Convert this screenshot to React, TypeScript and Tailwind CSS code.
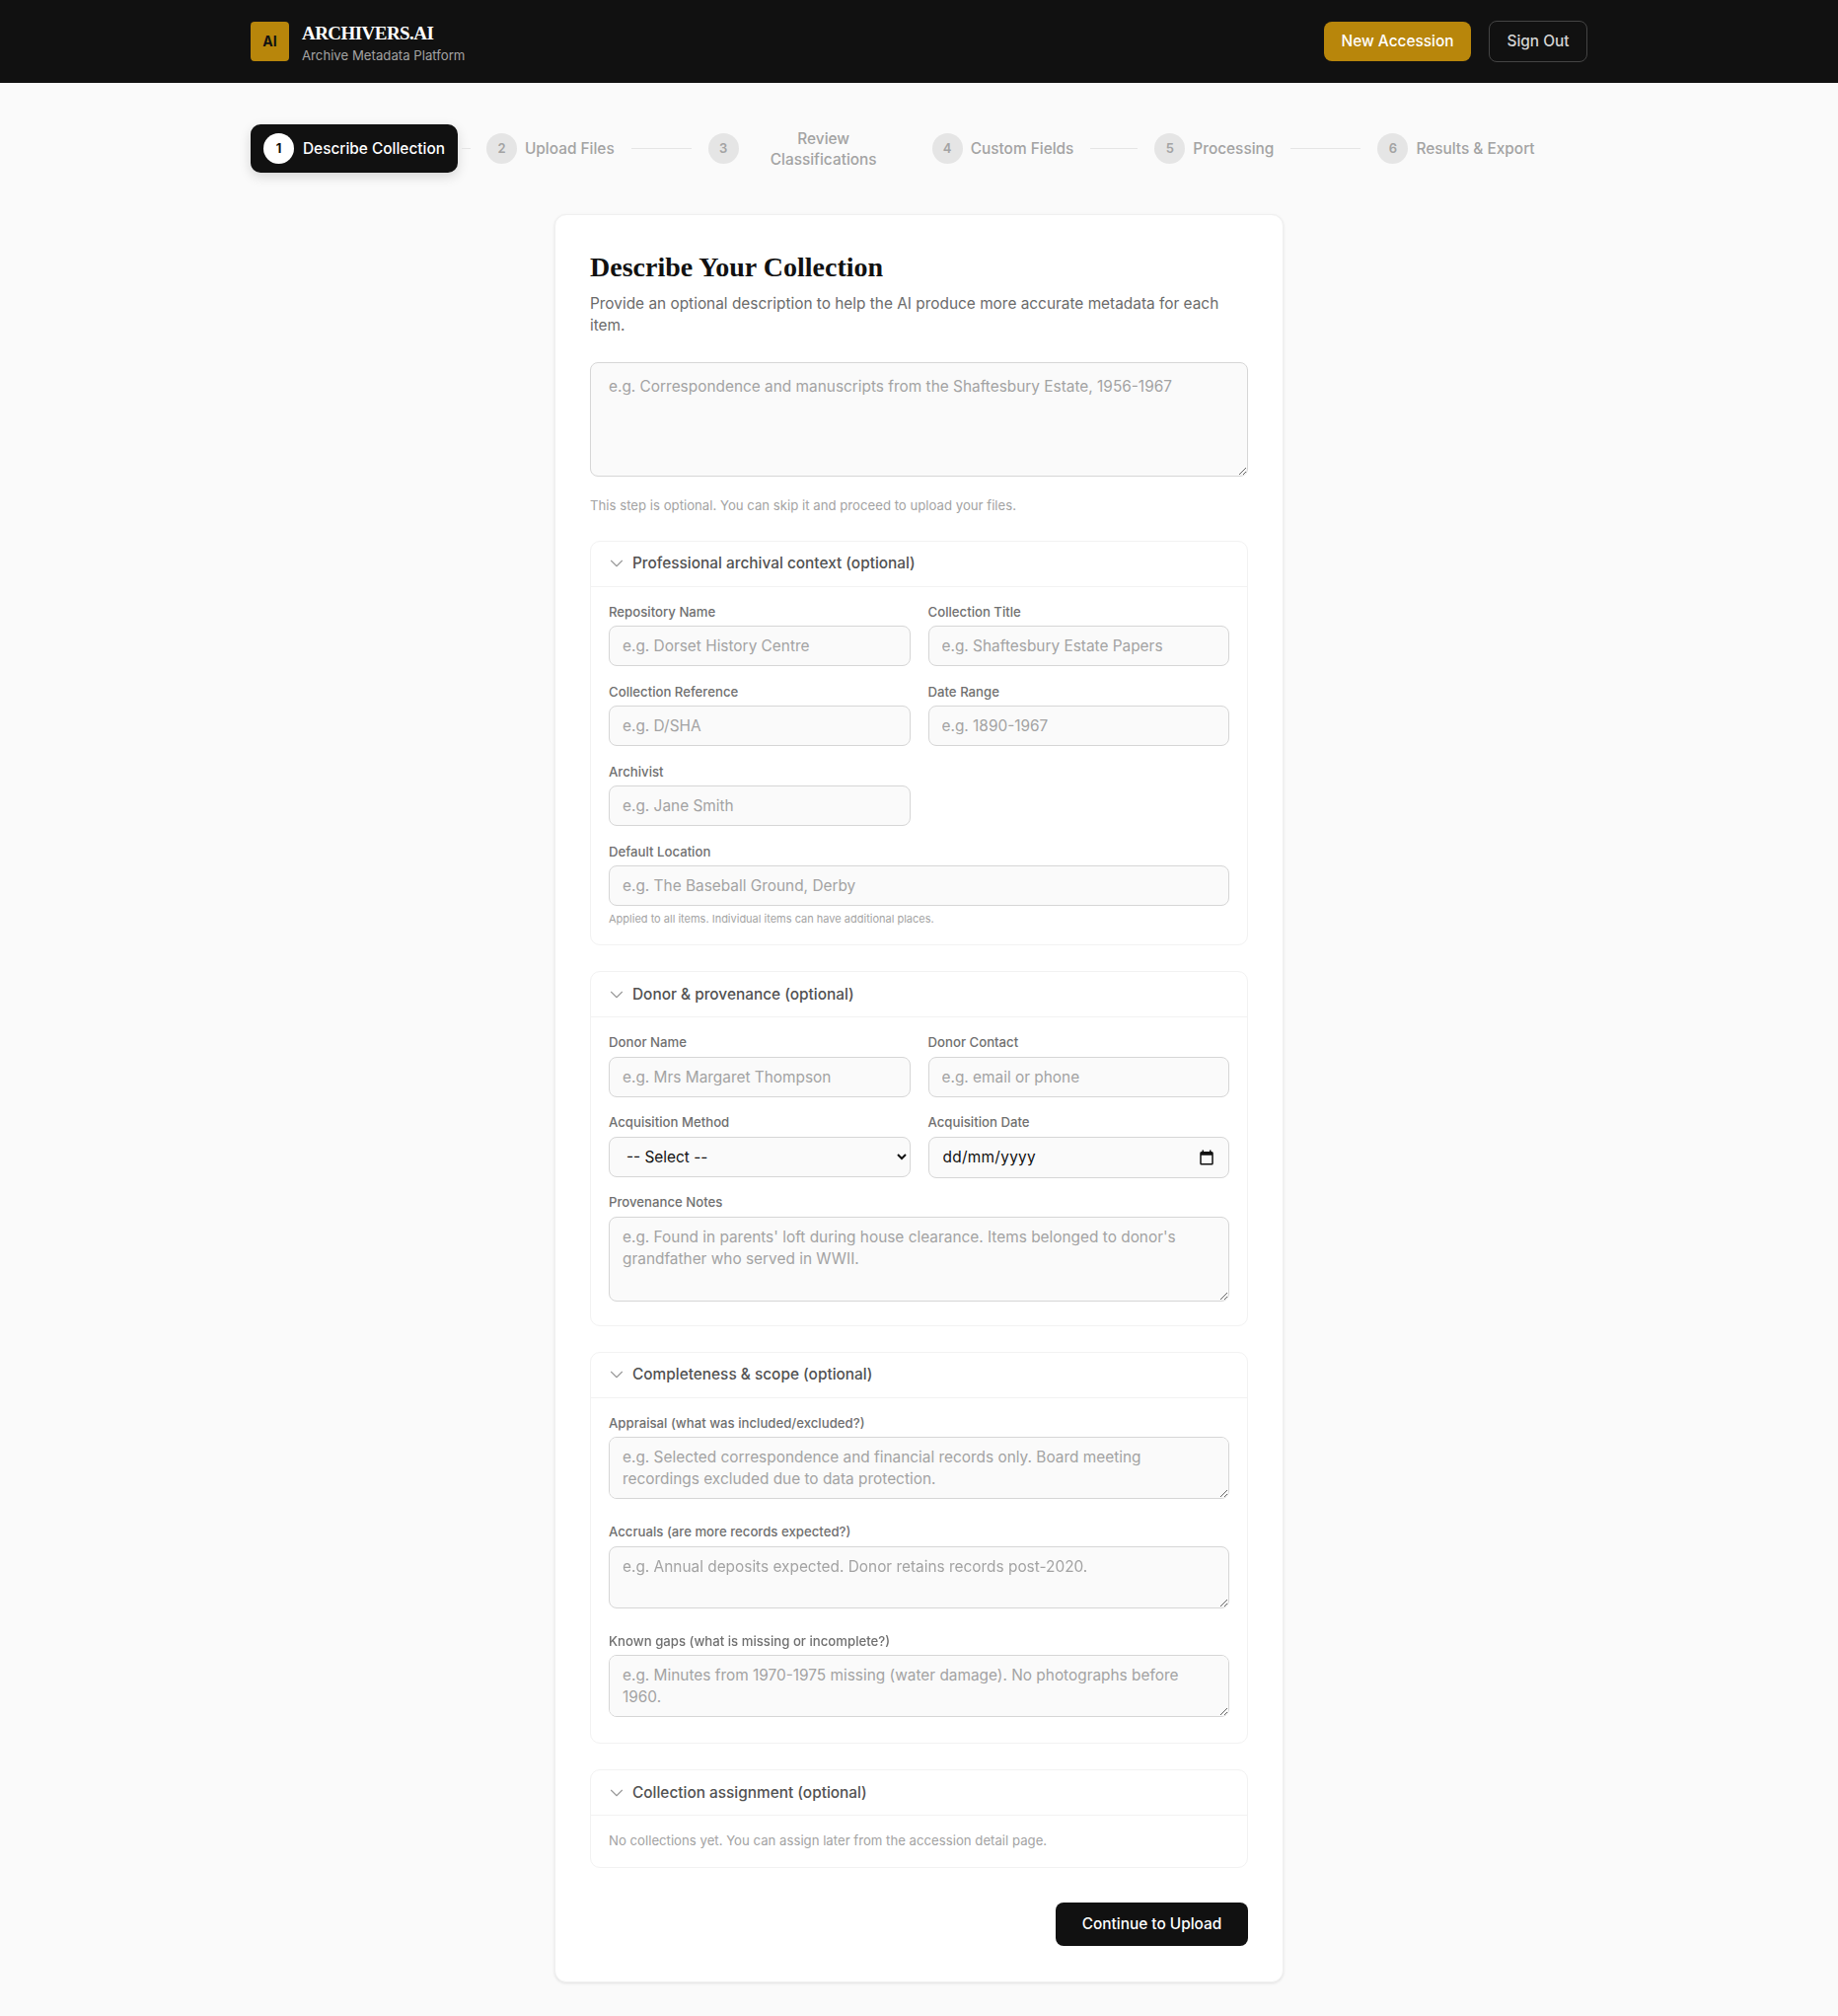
import React from 'react';
import { ChevronDown } from 'lucide-react';

const inter = "font-['Inter',sans-serif]";

const steps = [
  { n: 2, label: 'Upload Files', line: 'w-[61px]' },
  { n: 3, label: 'Review Classifications', line: '', wrap: true },
  { n: 4, label: 'Custom Fields', line: 'w-[48px]' },
  { n: 5, label: 'Processing', line: 'w-[71px]' },
  { n: 6, label: 'Results & Export', line: '' },
];

const inputCls =
  "block w-full h-[41px] rounded-lg border border-[#d6d6d6] bg-[#fafafa] px-[13px] text-[15.4px] text-[#111] placeholder:text-[#a3a3a3] outline-none";
const areaCls =
  "block w-full rounded-lg border border-[#d6d6d6] bg-[#fafafa] px-[13px] py-[9px] text-[15.4px] leading-[22px] text-[#111] placeholder:text-[#a3a3a3] outline-none";

const Label: React.FC<{ children: React.ReactNode }> = ({ children }) => (
  <label className="block mb-[4px] text-[13.2px] leading-[19.5px] font-medium text-[#707070]">{children}</label>
);

const Field: React.FC<{ label: string; placeholder: string }> = ({ label, placeholder }) => (
  <div>
    <Label>{label}</Label>
    <input className={inputCls} placeholder={placeholder} />
  </div>
);

const AreaField: React.FC<{ label: string; placeholder: string; h: string }> = ({ label, placeholder, h }) => (
  <div>
    <Label>{label}</Label>
    <textarea className={`${areaCls} ${h}`} placeholder={placeholder} />
  </div>
);

const Section: React.FC<{ title: string; pb?: string; children: React.ReactNode }> = ({ title, pb = 'pb-[18px]', children }) => (
  <section className="mb-[26px] rounded-[10px] border border-[#f2f2f2]">
    <div className="flex h-[46px] items-center gap-[5px] border-b border-[#f2f2f2] pl-[15px] pr-[18px]">
      <ChevronDown className="h-[22px] w-[22px] text-[#999]" strokeWidth={1.2} />
      <span className="text-[15.4px] font-medium text-[#525252]">{title}</span>
    </div>
    <div className={`px-[18px] pt-[16px] ${pb}`}>{children}</div>
  </section>
);

export default function App() {
  return (
    <div className={`${inter} min-h-[2043px] bg-[#fafafa] text-[#111]`}>
      <header className="h-[84px] bg-[#111111]">
        <div className="mx-auto flex h-full w-[1355px] items-center justify-between">
          <div className="flex items-center gap-[13px]">
            <div className="flex h-10 w-[39px] items-center justify-center rounded bg-[#b8860b] text-sm font-bold text-[#111]">AI</div>
            <div className="pt-[2px]">
              <div className="font-['Liberation_Serif',serif] text-[19px] leading-[26px] font-bold tracking-[-0.55px] text-white">ARCHIVERS.AI</div>
              <div className="text-[13.2px] leading-[19px] text-[#a3a3a3]">Archive Metadata Platform</div>
            </div>
          </div>
          <div className="flex items-center gap-[18px]">
            <button className="h-10 w-[149px] rounded-lg bg-[#b8860b] text-[15.4px] font-medium text-white">New Accession</button>
            <button className="h-[42px] w-[100px] rounded-lg border border-[#444] text-[15.4px] font-medium text-[#d4d4d4]">Sign Out</button>
          </div>
        </div>
      </header>

      <main className="mx-auto w-[1355px]">
        <nav className="mt-[42px] flex h-[49px] items-center">
          <div className="flex h-full items-center gap-[9px] rounded-[10px] bg-[#111] px-[13px] shadow-[0_4px_12px_rgba(0,0,0,0.15)]">
            <span className="flex h-[31px] w-[31px] items-center justify-center rounded-full bg-white text-[13px] font-bold text-[#111]">1</span>
            <span className="text-[15.4px] font-medium whitespace-nowrap text-white">Describe Collection</span>
          </div>
          <span className="mx-1 h-px w-[9px] bg-[#e5e5e5]" />
          {steps.map((s) => (
            <React.Fragment key={s.n}>
              <div className={`flex items-center gap-[8px] pl-[12px] ${s.wrap ? 'pr-[23px]' : 'pr-[12px]'}`}>
                <span className="flex h-[31px] w-[31px] items-center justify-center rounded-full bg-[#e5e5e5] text-[13px] font-semibold text-[#a3a3a3]">{s.n}</span>
                <span className={`text-[15.4px] leading-[21px] font-medium text-[#a3a3a3] ${s.wrap ? 'ml-[3px] w-[150px] px-[20px] text-center' : 'whitespace-nowrap'}`}>{s.label}</span>
              </div>
              {s.line ? <span className={`mx-[5px] h-px ${s.line} bg-[#e5e5e5]`} /> : null}
            </React.Fragment>
          ))}
        </nav>

        <div className="mx-auto mt-[42px] w-[739px] rounded-xl border border-[#f0f0f0] bg-white px-[35px] pt-[35px] pb-[36px] shadow-[0_1px_3px_rgba(0,0,0,0.1)]">
          <h1 className="font-['Liberation_Serif',serif] text-[28px] leading-[36px] font-bold text-[#111]">Describe Your Collection</h1>
          <p className="mt-[8px] text-[15.4px] leading-[22px] text-[#6b6b6b]">
            Provide an optional description to help the AI produce more accurate metadata for each item.
          </p>
          <textarea
            className="mt-[26px] block h-[116px] w-full rounded-lg border border-[#d6d6d6] bg-[#fafafa] px-[18px] py-[13px] text-[15.4px] leading-[22.5px] placeholder:text-[#a3a3a3] outline-none"
            placeholder="e.g. Correspondence and manuscripts from the Shaftesbury Estate, 1956-1967"
          />
          <p className="mt-[20px] mb-[25px] text-[13.2px] leading-[19.5px] text-[#a3a3a3]">
            This step is optional. You can skip it and proceed to upload your files.
          </p>

          <Section title="Professional archival context (optional)">
            <div className="grid grid-cols-2 gap-x-[18px] gap-y-[16.5px]">
              <Field label="Repository Name" placeholder="e.g. Dorset History Centre" />
              <Field label="Collection Title" placeholder="e.g. Shaftesbury Estate Papers" />
              <Field label="Collection Reference" placeholder="e.g. D/SHA" />
              <Field label="Date Range" placeholder="e.g. 1890-1967" />
              <Field label="Archivist" placeholder="e.g. Jane Smith" />
              <div />
              <div className="col-span-2">
                <Field label="Default Location" placeholder="e.g. The Baseball Ground, Derby" />
                <p className="mt-[5px] text-[11px] leading-[16px] text-[#a3a3a3]">Applied to all items. Individual items can have additional places.</p>
              </div>
            </div>
          </Section>

          <Section title="Donor & provenance (optional)" pb="pb-[24px]">
            <div className="grid grid-cols-2 gap-x-[18px] gap-y-[16.5px]">
              <Field label="Donor Name" placeholder="e.g. Mrs Margaret Thompson" />
              <Field label="Donor Contact" placeholder="e.g. email or phone" />
              <div>
                <Label>Acquisition Method</Label>
                <select className="block h-[41px] w-full rounded-lg border border-[#d6d6d6] bg-[#fafafa] px-[13px] text-[15.4px] text-[#111] outline-none">
                  <option>-- Select --</option>
                </select>
              </div>
              <div>
                <Label>Acquisition Date</Label>
                <div className="-mb-px flex h-[42px] w-full items-center justify-between rounded-lg border border-[#d6d6d6] bg-[#fafafa] pr-[13px] pl-[14px] text-[15.4px] tracking-[0.3px] text-[#111]">
                  <span>dd/mm/yyyy</span>
                  <svg viewBox="0 0 24 24" className="h-[18px] w-[18px]" fill="#111">
                    <path d="M19 4h-1V2h-2v2H8V2H6v2H5a2 2 0 0 0-2 2v14a2 2 0 0 0 2 2h14a2 2 0 0 0 2-2V6a2 2 0 0 0-2-2zm0 16H5V9h14v11z" />
                  </svg>
                </div>
              </div>
              <div className="col-span-2">
                <AreaField label="Provenance Notes" h="h-[86px]" placeholder="e.g. Found in parents' loft during house clearance. Items belonged to donor's grandfather who served in WWII." />
              </div>
            </div>
          </Section>

          <Section title="Completeness & scope (optional)" pb="pb-[26px]">
            <div className="flex flex-col gap-[24px]">
              <AreaField label="Appraisal (what was included/excluded?)" h="h-[63px]" placeholder="e.g. Selected correspondence and financial records only. Board meeting recordings excluded due to data protection." />
              <AreaField label="Accruals (are more records expected?)" h="h-[63px]" placeholder="e.g. Annual deposits expected. Donor retains records post-2020." />
              <AreaField label="Known gaps (what is missing or incomplete?)" h="h-[63px]" placeholder="e.g. Minutes from 1970-1975 missing (water damage). No photographs before 1960." />
            </div>
          </Section>

          <Section title="Collection assignment (optional)" pb="pb-[16px]">
            <p className="text-[13.2px] leading-[19.5px] text-[#a3a3a3]">No collections yet. You can assign later from the accession detail page.</p>
          </Section>

          <div className="mt-[35px] flex justify-end">
            <button className="h-[44px] w-[195px] rounded-lg bg-[#111] text-[15.4px] font-medium text-white">Continue to Upload</button>
          </div>
        </div>
      </main>
    </div>
  );
}
